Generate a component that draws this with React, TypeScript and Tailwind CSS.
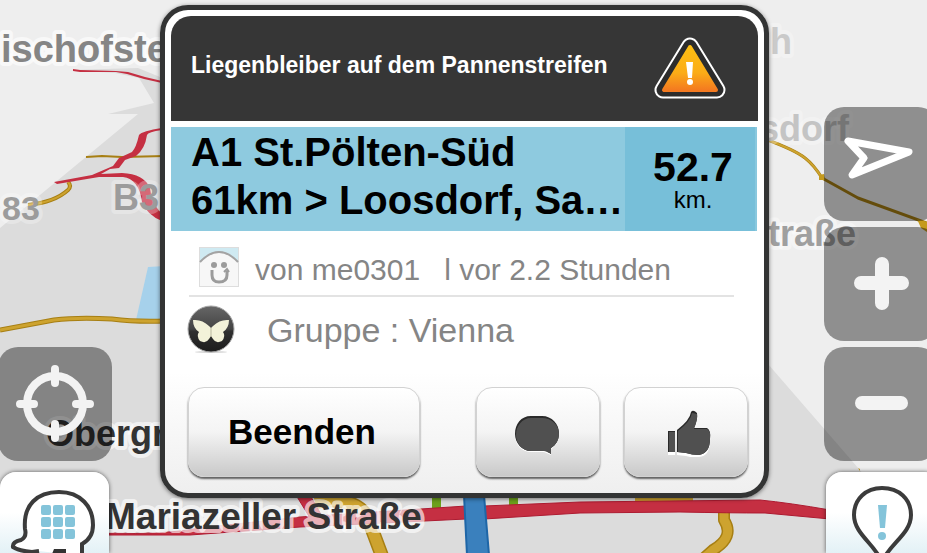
import React from 'react';

const mapLabels = [
    { text: "ischofste", x: 1, y: 62, size: 38, fill: "#858585", halo: 0.6, anchor: "start" },
    { text: "83", x: 2, y: 220, size: 34, fill: "#9c9c9c", halo: 0.3, anchor: "start" },
    { text: "B3", x: 113, y: 210, size: 36, fill: "#9c9c9c", halo: 0.3, anchor: "start" },
    { text: "Obergr", x: 46, y: 446, size: 36, fill: "#333333", halo: 0.6, anchor: "start" },
    { text: "Mariazeller Straße", x: 105, y: 529, size: 37, fill: "#333333", halo: 0.65, anchor: "start" },
    { text: "h", x: 792, y: 54, size: 36, fill: "#cacaca", halo: 0.3, anchor: "end" },
    { text: "sdorf", x: 849, y: 141, size: 36, fill: "#c4c4c4", halo: 0.3, anchor: "end" },
    { text: "traße", x: 856, y: 246, size: 36, fill: "#9f9f9f", halo: 0.4, anchor: "end" },
] as const;

const MapCanvas = () => (
  <svg className="absolute inset-0 h-full w-full" viewBox="0 0 927 553" preserveAspectRatio="xMidYMid slice">
    <rect width="927" height="553" fill="#eeeeee" />
    <path d="M0 228 L138 114 H108 L154 103 L139 78 L115 73 L70 70 L138 68 L160 77 H400 V200 L768 364 L859 469 L927 548 V553 H0 Z" fill="#dcdcdc" />
    <path d="M148 267 L165 266 V320 H136 Z" fill="#a6d1eb" />

    {/* Side roads */}
    <g fill="none" stroke="#a77f13" strokeLinejoin="round">
      <path d="M0 330 L54 320 Q78 317 112 319 Q135 322 165 321" strokeWidth="5" />
      <path d="M86 157 L102 156 L122 157 L165 156" strokeWidth="2" />
      <path d="M28 205 Q55 202 68 190 Q72 186 68 182" strokeWidth="4" />
      <path d="M765 139 Q795 150 805 158 Q814 165 822 178 L858 198 L927 223" strokeWidth="3" />
      <path d="M315 502 Q353 496 367 516 L382 556" strokeWidth="14" />
      <path d="M635 499 H693" strokeWidth="9" />
      <path d="M724 507 V520 Q735 537 713 550 L704 558" strokeWidth="12" />
    </g>
    <g fill="none" stroke="#cda32f" strokeLinejoin="round">
      <path d="M0 330 L54 320 Q78 317 112 319 Q135 322 165 321" strokeWidth="3" />
      <path d="M28 205 Q55 202 68 190 Q72 186 68 182" strokeWidth="2" />
      <path d="M765 139 Q795 150 805 158 Q814 165 822 178" strokeWidth="2" />
      <path d="M315 502 Q353 496 367 516 L382 556" strokeWidth="11" />
      <path d="M635 499 H693" strokeWidth="7" />
      <path d="M724 507 V520 Q735 537 713 550 L704 558" strokeWidth="9" />
    </g>
    <path d="M819 175 L824 174 L825 180 L819 180 Z M917 219 L927 222 V232 L921 228 Z M858 468 L860 469 L860 471 Z" fill="#c59a1d" />
    <path d="M432 495 H441 V510 H432 Z M509 495 H518 V508 H509 Z" fill="#6ca11b" />

    {/* Motorways */}
    <g fill="#c52f42" stroke="#ad1b31" strokeWidth="1">
      <path d="M73 69 L80 70 L116 71 L128 72 L145 77 L162 81 V83 L144 79 L127 74 L116 72 L80 72 L73 71 Z" strokeWidth="0" />
      <path d="M54 182 L92 175 L113 166 L119 158 L132 152 Q136 148 139 135 Q142 131 162 128 V130 Q148 132 147 135 Q145 149 136 156 L125 160 L119 168 L110 169 L101 174 L122 173 Q144 174 150 188 Q151 203 162 214 V221 Q147 215 142 202 Q139 179 123 177 L99 177 L57 184 Z" strokeWidth="0" />
      <path d="M296 495 H310 L323 518 H310 Z" />
      <path d="M108 533 Q165 535 200 528 L300 517 L466 506 H484 L580 502 L760 500 Q790 503 830 510 V519 L765 513 Q730 513 680 512 L580 513 L484 519 H466 L300 527 L190 535 L108 535 Z" />
    </g>
    <path d="M464 495 H484 L489 555 H467 Z" fill="#3a80bd" stroke="#1e66a7" strokeWidth="2" />

    {mapLabels.map((label) => (
        <text
            key={label.text}
            x={label.x}
            y={label.y}
            fontSize={label.size}
            fill={label.fill}
            textAnchor={label.anchor}
            stroke="#ffffff"
            strokeOpacity={label.halo}
            strokeWidth="8"
            strokeLinejoin="round"
            className="font-bold [paint-order:stroke]"
        >{label.text}</text>
    ))}
  </svg>
);

const WarningIcon = () => (
  <svg className="h-16 w-[72px] flex-none" viewBox="0 0 72 64">
    <defs>
      <linearGradient id="warning" x1="0" y1="0" x2="0" y2="1">
        <stop offset="0" stopColor="#fdbe12" />
        <stop offset="0.6" stopColor="#fbac17" />
        <stop offset="1" stopColor="#f47a20" />
      </linearGradient>
    </defs>
    <path d="M36 9 L9 53 H63 Z" fill="#ffffff" stroke="#ffffff" strokeWidth="17" strokeLinejoin="round" />
    <path d="M36 9 L9 53 H63 Z" fill="#2c2c2c" stroke="#2c2c2c" strokeWidth="13" strokeLinejoin="round" />
    <path d="M36 10 L10 53 H62 Z" fill="url(#warning)" stroke="url(#warning)" strokeWidth="4" strokeLinejoin="round" />
    <path d="M32 25 H39 L38 41 H34 Z" fill="#ffffff" />
    <circle cx="36" cy="45" r="3" fill="#ffffff" />
  </svg>
);

const Avatar = () => (
  <svg className="h-10 w-10 flex-none" viewBox="0 0 40 40">
    <rect x="0.5" y="0.5" width="39" height="39" fill="#cfeaf2" stroke="#dddddd" />
    <path d="M1 15 Q20 -5 39 15 V39 H1 Z" fill="#f7f7f7" />
    <path d="M1 15 Q20 -5 39 15" fill="none" stroke="#a3a3a3" strokeWidth="2" />
    <circle cx="15" cy="18" r="3" fill="#9b9b9b" />
    <circle cx="25" cy="18" r="3" fill="#9b9b9b" />
    <path d="M13 23 V28 Q13 35 20 35 Q28 35 28 28 V24" fill="none" stroke="#9b9b9b" strokeWidth="3" />
    <path d="M25 25 L28 22 L30 25" fill="none" stroke="#9b9b9b" strokeWidth="2" />
  </svg>
);

const GroupIcon = () => (
  <svg className="h-[50px] w-[50px] flex-none" viewBox="0 0 50 50">
    <defs>
      <linearGradient id="badge" x1="0" y1="0" x2="0" y2="1">
        <stop offset="0" stopColor="#666666" />
        <stop offset="0.5" stopColor="#444444" />
        <stop offset="0.55" stopColor="#303030" />
        <stop offset="1" stopColor="#1c1c1c" />
      </linearGradient>
    </defs>
    <ellipse cx="25" cy="48" rx="16" ry="1" fill="#d8d8d8" />
    <circle cx="25" cy="25" r="23" fill="url(#badge)" stroke="#a5a5a5" strokeWidth="1" />
    <path d="M25 24 L23 22 Q16 15 7 16 Q7 24 13 28 Q10 32 14 37 Q20 40 23 35 L25 32 L27 35 Q30 40 36 37 Q40 32 37 28 Q43 24 43 16 Q34 15 27 22 Z" fill="#f3f2d9" />
    <path d="M25 24 V33" stroke="#b9b89f" strokeWidth="1" />
  </svg>
);

const CommentIcon = () => (
  <svg className="mt-1.5 mr-0.5 h-12 w-12" viewBox="0 0 48 48">
    <path d="M18 7 H30 C40 7 46 14 46 23 C46 30 43 35 38 38 V44 L31 41 H18 C9 41 2 34 2 24 C2 14 9 7 18 7 Z" fill="#ffffff" />
    <path d="M18 5 H29 C39 5 46 13 46 22 C46 29 43 34 38 37 V43 C36 42 34 40 31 40 H18 C9 40 2 32 2 23 C2 13 8 5 18 5 Z" fill="#2a2a2a" />
    <path d="M18 7 H29 C39 7 46 14 46 23 C46 29 43 34 38 37 V43 C36 42 34 40 31 40 H18 C9 40 3 32 3 24 C3 15 9 7 18 7 Z" fill="#505050" />
  </svg>
);

const ThumbIcon = () => (
  <svg className="mt-0.5 ml-1.5 h-12 w-12" viewBox="0 0 48 48">
    <g transform="translate(0 2)" fill="#ffffff">
      <path d="M3 23 H10 V44 H3 Z M12 22 Q25 11 26 4 Q28 1 32 4 Q33 10 29 20 H42 Q46 21 45 30 Q45 45 34 46 Q27 47 21 45 L12 44 Z" />
    </g>
    <path d="M3 22 H10 V43 H3 Z M12 21 Q25 11 26 3 Q28 0 32 4 Q33 10 29 19 H42 Q46 21 45 30 Q45 44 34 46 Q27 46 21 44 L12 43 Z" fill="#2a2a2a" />
    <path d="M4 23 H10 V43 H4 Z M13 22 Q26 12 27 4 L32 5 Q33 10 29 20 H42 Q46 22 45 30 Q45 44 34 46 Q27 46 21 44 L13 43 Z" fill="#505050" />
  </svg>
);

const AlertDialog = () => {
  const actionClass = "flex h-[90px] items-center justify-center rounded-2xl border border-[#d2d2d2] bg-linear-to-b from-white via-[#f4f4f4] to-[#c9c9c9] shadow-[0_2px_2px_rgba(0,0,0,0.6)]";

  return (
    <section role="dialog" aria-labelledby="alert-title" className="mt-[5px] mr-[55px] mb-[55px] ml-12 min-w-0 flex-1 self-start rounded-[28px] border-5 border-[#333434] bg-linear-to-b from-white from-75% to-[#efefef] px-1.5 pt-1.5 pb-4 shadow-[0_1px_4px_rgba(0,0,0,0.5)]">
      <header className="flex h-[105px] items-center justify-between rounded-t-[20px] bg-[#363636] pr-8 pl-5">
        <h1 id="alert-title" className="truncate pb-1.5 text-[23px] font-bold text-white">Liegenbleiber auf dem Pannenstreifen</h1>
        <WarningIcon />
      </header>

      {/* Location and distance */}
      <div className="mt-1.5 mr-px flex h-[104px] bg-[#8ecadf] text-black">
        <p className="min-w-0 flex-1 pt-px pl-5 text-[40px] leading-12 font-bold">
          <span className="block truncate">A1 St.Pölten-Süd</span>
          <span className="block whitespace-nowrap">61km &gt; Loosdorf, Sa…</span>
        </p>
        <div className="flex w-[132px] flex-none flex-col items-center border-r-2 border-[#89c8de] bg-[#77bfd9] pt-5 pl-1.5">
          <span className="text-[41px] leading-[41px] font-bold">52.7</span>
          <span className="text-2xl leading-6">km.</span>
        </div>
      </div>

      <div className="mr-6 ml-[18px] flex h-[66px] items-center border-b-2 border-[#e3e3e3] pt-2 pl-2.5 text-[30px] text-[#858585]">
        <Avatar />
        <span className="ml-4 pt-1 whitespace-nowrap">von me0301</span>
        <span className="ml-6 pt-1 whitespace-nowrap">l vor 2.2 Stunden</span>
      </div>
      <div className="ml-[15px] flex h-16 items-center text-[34px] text-[#858585]">
        <GroupIcon />
        <span className="ml-[31px] pt-0.5">Gruppe : Vienna</span>
      </div>

      <div className="mt-[26px] mr-2.5 ml-[17px] flex">
        <button className={`${actionClass} w-[232px] pr-1 text-[35px] font-bold text-black`}>Beenden</button>
        <button aria-label="Kommentar" className={`${actionClass} ml-auto w-[124px]`}><CommentIcon /></button>
        <button aria-label="Danke" className={`${actionClass} ml-6 w-[124px]`}><ThumbIcon /></button>
      </div>
    </section>
  );
};

export default function App() {
  const mapButton = "flex h-[114px] w-[114px] flex-none items-center justify-center rounded-[20px] bg-black/40";
  const cornerButton = "flex h-[81px] flex-none justify-center rounded-t-2xl bg-linear-to-b from-white from-50% to-[#e3f1f6] shadow-[0_0_4px_rgba(0,0,0,0.6)]";

  return (
    <main className="relative h-screen overflow-hidden bg-[#dcdcdc] font-['Liberation_Sans',Arial,sans-serif]">
      <MapCanvas />
      <div className="relative flex h-full">
        <nav className="flex w-28 flex-none flex-col justify-end gap-[11px]">
          <button aria-label="Standort" className={`${mapButton} -ml-0.5`}>
            <svg className="h-20 w-20" viewBox="0 0 80 80" fill="none" stroke="#f3f3f3" strokeWidth="8">
              <circle cx="40" cy="40" r="28" />
              <path d="M40 5 V19 M40 60 V74 M5 40 H19 M61 40 H75" strokeLinecap="round" />
            </svg>
          </button>
          <button aria-label="Menü" className={`${cornerButton} w-[109px]`}>
            <svg className="h-[81px] w-[109px]" viewBox="0 0 109 81">
              <path d="M39 79 L32 80 Q19 79 13 75 Q12 70 21 68 Q27 65 25 57 C23 33 37 20 59 20 C81 20 93 35 93 53 Q93 66 82 72 V84" fill="#ffffff" stroke="#3b3b3b" strokeWidth="4" />
              <path d="M54 77 H66 V82 H52 Z" fill="#333333" />
              <g fill="#84c4da">
                {[41, 53, 65].map((x) => [33, 45, 57].map((y) => (
                    <rect key={`${x}-${y}`} x={x} y={y} width="10" height="10" rx="2" />
                )))}
              </g>
            </svg>
          </button>
        </nav>

        <AlertDialog />

        <nav className="flex w-[103px] flex-none flex-col justify-end gap-1.5">
          <button aria-label="Navigation" className={mapButton}>
            <svg className="h-20 w-20" viewBox="0 0 80 80" fill="none" stroke="#ffffff" strokeWidth="7" strokeLinejoin="round">
              <path d="M7 17 L68 28 L11 51 L23 34 Z" />
            </svg>
          </button>
          <button aria-label="Vergrößern" className={mapButton}>
            <svg className="h-20 w-20" viewBox="0 0 80 80" stroke="#f3f3f3" strokeWidth="14" strokeLinecap="round">
              <path d="M41 20 V59 M20 39 H61" />
            </svg>
          </button>
          <button aria-label="Verkleinern" className={mapButton}>
            <svg className="h-20 w-20" viewBox="0 0 80 80" stroke="#f3f3f3" strokeWidth="14" strokeLinecap="round">
              <path d="M21 39 H60" />
            </svg>
          </button>
          <button aria-label="Melden" className={`${cornerButton} mt-[5px] ml-0.5 w-[114px]`}>
            <svg className="h-[81px] w-[114px]" viewBox="0 0 114 81">
              <path d="M56 90 C49 72 28 62 28 43 C28 27 40 16 56 16 C73 16 85 27 85 43 C85 62 63 72 56 90 Z" fill="#ffffff" stroke="#3b3b3b" strokeWidth="4" />
              <path d="M52 33 H61 L59 56 H54 Z" fill="#84c4da" />
              <circle cx="56" cy="64" r="4" fill="#84c4da" />
            </svg>
          </button>
        </nav>
      </div>
    </main>
  );
}
